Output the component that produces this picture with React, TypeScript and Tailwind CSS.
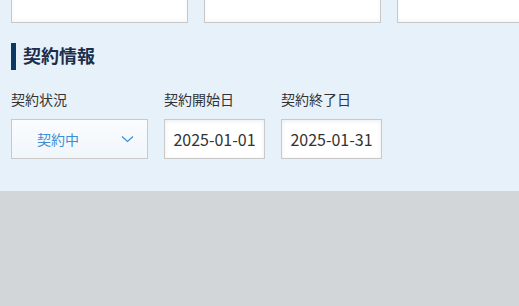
import React from 'react';

const font = { fontFamily: '"Noto Sans CJK JP", "Noto Sans", sans-serif' };

function DateField({ label, value }: { label: string; value: string }) {
  return (
    <div className="flex flex-col">
      <label className="text-[14px] leading-[20px] text-[#333]">{label}</label>
      <div className="mt-[10px] flex h-[40px] w-[101px] items-center justify-center border border-[#c9c9c9] bg-white text-[16px] text-[#333] shadow-[inset_0_1px_4px_rgba(0,0,0,0.08)]">
        {value}
      </div>
    </div>
  );
}

export default function App() {
  return (
    <div className="h-[306px] w-[519px] overflow-hidden bg-[#d3d6d8]" style={font}>
      <section className="h-[191px] bg-[#e7f1fa] pl-[11px]">
        {/* cards continuing from above */}
        <div className="flex gap-[16px]">
          {[0, 1, 2].map((i) => (
            <div
              key={i}
              className="h-[23px] w-[177px] shrink-0 border-x border-b border-[#c8c8c8] bg-white shadow-[inset_0_-2px_4px_rgba(0,0,0,0.04)]"
            />
          ))}
        </div>

        <div className="mt-[20px] flex items-start">
          <span className="h-[27px] w-[5px] bg-[#0d3863]" />
          <h2 className="ml-[7px] text-[18px] font-bold leading-[24px] text-[#1b2e4b]">契約情報</h2>
        </div>

        <div className="mt-[19px] flex gap-[16px]">
          <div className="flex flex-col">
            <label className="text-[14px] leading-[20px] text-[#333]">契約状況</label>
            <div className="mt-[10px] flex h-[40px] w-[137px] items-center border border-[#c9c9c9] bg-gradient-to-b from-[#fafcfe] to-[#f1f6fb] pl-[25px] pr-[13px]">
              <span className="flex-1 text-[14px] text-[#3b8ed8]">契約中</span>
              <svg width="13" height="8" viewBox="0 0 13 8" fill="none">
                <path d="M1 1.5 L6.5 6.5 L12 1.5" stroke="#3b8ed8" strokeWidth="1.2" />
              </svg>
            </div>
          </div>
          <DateField label="契約開始日" value="2025-01-01" />
          <DateField label="契約終了日" value="2025-01-31" />
        </div>
      </section>
    </div>
  );
}
